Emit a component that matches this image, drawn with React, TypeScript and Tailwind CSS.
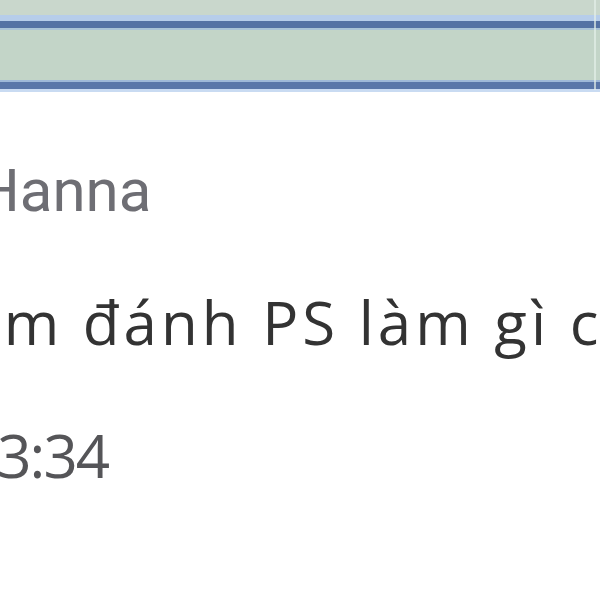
export default function App() {
  return (
    <div className="w-[600px] h-[600px] overflow-hidden bg-white relative flex flex-col">
      <div className="h-[15px] bg-[#c9d7cc] shrink-0" />
      <div className="h-[6px] bg-[#b6cdea] shrink-0" />
      <div className="h-[7px] bg-[#5472a4] shrink-0" />
      <div className="h-[2px] bg-[#a9c3d6] shrink-0" />
      <div className="h-[50px] bg-[#c3d5c8] shrink-0" />
      <div className="h-[2px] bg-[#9fb9d8] shrink-0" />
      <div className="h-[7px] bg-[#5a77a9] shrink-0" />
      <div className="h-[3px] bg-[#c9dbf2] shrink-0" />
      <div className="absolute top-0 bottom-[510px] left-[594px] w-[2px] bg-[#e4efe8] opacity-70" />
      <div
        className="flex flex-col whitespace-nowrap"
        style={{ fontFamily: '"Open Sans", "Noto Sans", sans-serif' }}
      >
        <div
          className="mt-[67px] ml-[-23px] text-[60px] leading-[64px] text-[#6e6e74]"
          style={{ fontFamily: 'Roboto, "Noto Sans", sans-serif' }}
        >
          Hanna
        </div>
        <div className="mt-[67px] ml-[-34px] text-[60px] leading-[64px] tracking-[4px] text-[#333333]">
          em đánh PS làm gì cho
        </div>
        <div className="mt-[69px] ml-[-35px] text-[60px] leading-[64px] tracking-[-2px] text-[#555558]">
          13:34
        </div>
      </div>
    </div>
  );
}
